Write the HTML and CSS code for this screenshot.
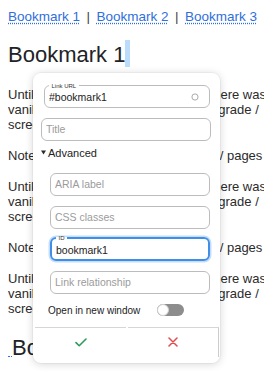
FILE: index.html
```html
<!DOCTYPE html>
<html lang="en">
<head>
<meta charset="utf-8">
<title>Bookmarks</title>
<link rel="stylesheet" href="styles.css">
</head>
<body>
<nav class="toc">
  <a class="toc-link" href="#bookmark1">Bookmark 1</a>
  <span class="toc-sep">|</span>
  <a class="toc-link" href="#bookmark2">Bookmark 2</a>
  <span class="toc-sep">|</span>
  <a class="toc-link" href="#bookmark3">Bookmark 3</a>
</nav>

<h1 class="heading" id="bookmark1">Bookmark 1<span class="caret-sel"></span></h1>

<p class="para">
  <span class="line">Until a recent release of the editor, there was no way</span>
  <span class="line">vanilla anchors were lost on each upgrade /</span>
  <span class="line">screen refresh, so links broke.</span>
</p>
<p class="para"><span class="line">Note: these work the same for posts / pages too.</span></p>
<p class="para">
  <span class="line">Until a recent release of the editor, there was no way</span>
  <span class="line">vanilla anchors were lost on each upgrade /</span>
  <span class="line">screen refresh, so links broke.</span>
</p>
<p class="para"><span class="line">Note: these work the same for posts / pages too.</span></p>
<p class="para">
  <span class="line">Until a recent release of the editor, there was no way</span>
  <span class="line">vanilla anchors were lost on each upgrade /</span>
  <span class="line">screen refresh, so links broke.</span>
</p>

<h2 class="heading heading-next" id="bookmark2"><span class="anchor-mark"></span>Bookmark 2</h2>

<form class="link-popup">
  <fieldset class="field field-url">
    <legend class="field-label">Link URL</legend>
    <div class="field-row">
      <input class="field-input" type="text" value="#bookmark1">
      <svg class="field-icon" width="8" height="8" viewBox="0 0 8 8" aria-hidden="true"><circle cx="4" cy="4" r="3.1" fill="none" stroke="#a9a9a9" stroke-width="1"/></svg>
    </div>
  </fieldset>

  <input class="text-input input-title" type="text" placeholder="Title">

  <details class="advanced" open>
    <summary class="advanced-toggle"><svg class="advanced-caret" width="5" height="5" viewBox="0 0 5 5" aria-hidden="true"><path d="M0 0.6H5L2.5 4.6Z" fill="#2a2a2a"/></svg>Advanced</summary>
    <div class="advanced-body">
      <input class="text-input" type="text" placeholder="ARIA label">
      <input class="text-input input-gap" type="text" placeholder="CSS classes">
      <fieldset class="field field-focus">
        <legend class="field-label">ID</legend>
        <input class="field-input" type="text" value="bookmark1">
      </fieldset>
      <input class="text-input input-gap" type="text" placeholder="Link relationship">
    </div>
  </details>

  <div class="switch-row">
    <span class="switch-label">Open in new window</span>
    <span class="switch" role="switch" aria-checked="false"><span class="switch-knob"></span></span>
  </div>

  <div class="popup-actions">
    <button class="action action-ok" type="button" aria-label="Save">
      <svg width="12" height="9" viewBox="0 0 12 9" aria-hidden="true"><path d="M1 4.6L4.2 7.7L11 1" fill="none" stroke="#2c9a5c" stroke-width="1.6" stroke-linecap="round" stroke-linejoin="round"/></svg>
    </button>
    <button class="action action-cancel" type="button" aria-label="Cancel">
      <svg width="10" height="10" viewBox="0 0 10 10" aria-hidden="true"><path d="M1 1L9 9M9 1L1 9" fill="none" stroke="#e04b4b" stroke-width="1.5" stroke-linecap="round"/></svg>
    </button>
  </div>
</form>
</body>
</html>
```

FILE: styles.css
```css
* {
  box-sizing: border-box;
}

html,
body {
  margin: 0;
  overflow: hidden;
  background: #ffffff;
}

body {
  padding: 0 8px;
  height: 371px;
  font-family: "Liberation Sans", Arial, sans-serif;
  color: #2b2b2b;
}

/* ---------- page content ---------- */

.toc {
  display: flex;
  gap: 6.5px;
  padding-top: 9px;
  font-size: 13.5px;
  line-height: 16px;
  white-space: nowrap;
}

.toc-link {
  color: #2f6fdc;
  text-decoration: underline dotted;
  text-underline-offset: 2px;
}

.toc-sep {
  color: #444444;
}

.heading {
  margin: 15px 0 18.5px;
  font-size: 22px;
  line-height: 26px;
  font-weight: 400;
  color: #222226;
  white-space: nowrap;
}

.heading-next {
  margin-top: 19px;
}

.caret-sel {
  display: inline-block;
  width: 5px;
  height: 27px;
  vertical-align: -5px;
  background: #bcdcfb;
}

.anchor-mark {
  display: inline-block;
  width: 4px;
  height: 0;
  vertical-align: -2px;
  border-bottom: 1px dotted #2f6fdc;
}

.para {
  margin: 16px 0;
  font-size: 13px;
  line-height: 15px;
  white-space: nowrap;
}

.line {
  display: block;
}

/* ---------- link popup ---------- */

.link-popup {
  position: absolute;
  top: 73px;
  left: 33px;
  width: 187px;
  margin: 0;
  padding: 8.5px 9px 6.5px 8px;
  background: #ffffff;
  border-radius: 8px;
  box-shadow: 0 1px 8px rgba(0, 0, 0, 0.17), 0 0 0 1px rgba(0, 0, 0, 0.03);
  overflow: hidden;
  color: #222222;
}

.field {
  min-width: 0;
  margin: 0 1px 0 3px;
  padding: 0 10px 0 4px;
  border: 1px solid #bcbcbc;
  border-radius: 6px;
}

.field-label {
  padding: 0 2.5px;
  font-size: 6px;
  line-height: 8px;
  color: #333333;
}

.field-row {
  display: flex;
  align-items: flex-start;
  padding-bottom: 3px;
}

.field-input {
  display: block;
  flex: 1;
  width: 100%;
  min-width: 0;
  height: 14px;
  margin: 0;
  padding: 0;
  border: 0;
  outline: none;
  background: transparent;
  font-family: "Liberation Sans", Arial, sans-serif;
  font-size: 10.5px;
  color: #222222;
}

.field-icon {
  flex: none;
  margin-top: 3.5px;
}

.text-input {
  display: block;
  width: 100%;
  height: 23px;
  margin: 0;
  padding: 0 4px;
  border: 1px solid #bcbcbc;
  border-radius: 6px;
  outline: none;
  background: #ffffff;
  font-family: "Liberation Sans", Arial, sans-serif;
  font-size: 10.5px;
  color: #222222;
}

.text-input::placeholder {
  color: #9b9b9b;
}

.input-title {
  margin-top: 10px;
}

.input-gap {
  margin-top: 10px;
}

.advanced {
  margin-top: 5px;
}

.advanced-toggle {
  display: flex;
  align-items: center;
  gap: 2px;
  height: 14px;
  font-size: 11px;
  line-height: 14px;
  color: #222222;
  list-style: none;
  cursor: pointer;
}

.advanced-toggle::-webkit-details-marker {
  display: none;
}

.advanced-caret {
  flex: none;
}

.advanced-body {
  margin-top: 13px;
  padding: 0 1px 0 9px;
}

.field-focus {
  margin: 5px 0 0;
  padding: 0 4px;
  border: 2px solid #3f8fe8;
  box-shadow: 0 0 0 1.5px rgba(63, 143, 232, 0.3);
}

.field-focus .field-input {
  height: 16px;
  margin-bottom: 1px;
}

.switch-row {
  display: flex;
  align-items: center;
  height: 12px;
  margin-top: 10.5px;
  padding-left: 7px;
  font-size: 10px;
  color: #222222;
}

.switch {
  position: relative;
  flex: none;
  width: 27px;
  height: 12px;
  margin-left: 17px;
  border-radius: 6px;
  background: #8d8d8d;
}

.switch-knob {
  position: absolute;
  top: 0;
  left: 0;
  width: 12px;
  height: 12px;
  border: 1px solid #d2d2d2;
  border-radius: 50%;
  background: #ffffff;
}

.popup-actions {
  display: grid;
  grid-template-columns: 1fr 1fr;
  gap: 2px;
  height: 30px;
  margin: 10.5px -8px 0 -6px;
}

.action {
  display: flex;
  align-items: center;
  justify-content: center;
  margin: 0;
  padding: 0;
  border: 0;
  border-top: 1px solid #d6d6d6;
  background: transparent;
  cursor: pointer;
}

.action-cancel {
  border-right: 1px solid #cccccc;
}
```
